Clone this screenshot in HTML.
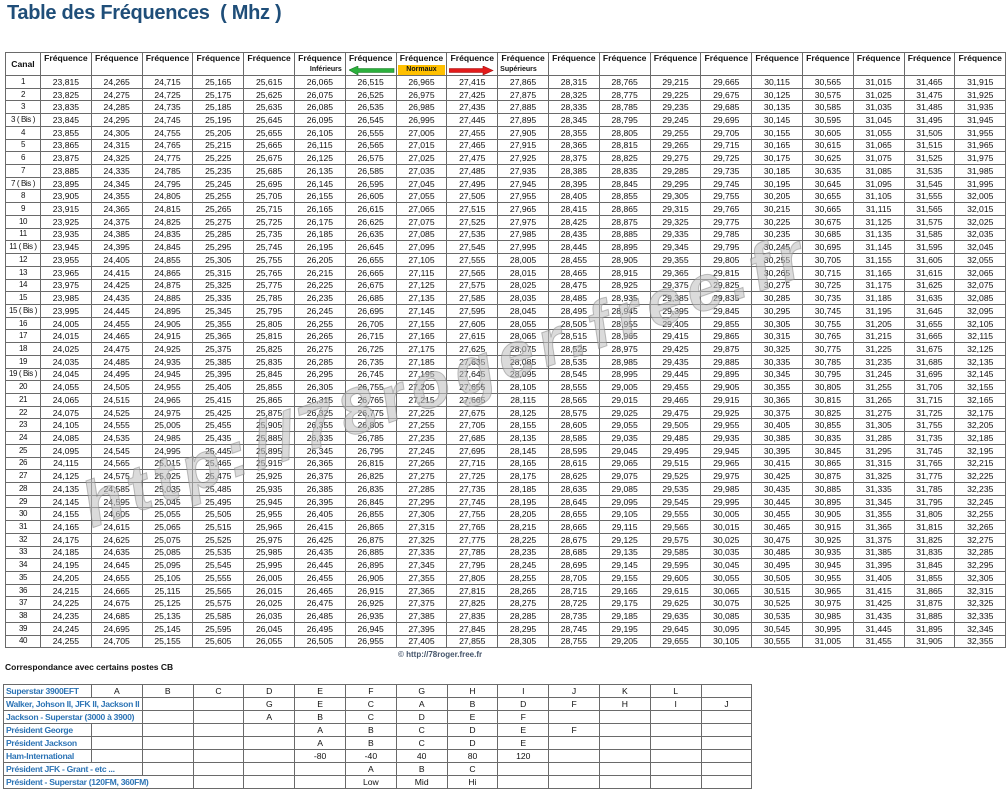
<!DOCTYPE html>
<html><head><meta charset="utf-8"><style>
body{margin:0;width:1006px;height:800px;background:#fff;position:relative;overflow:hidden;font-family:"Liberation Sans",Arial,sans-serif;color:#111}
h1{position:absolute;left:7px;top:2px;margin:0;font-size:20px;font-weight:bold;color:#1f4e79;letter-spacing:-0.3px;white-space:pre}
table{border-collapse:collapse;table-layout:fixed;position:absolute}
#m{left:5px;top:52px;width:1000px}
#m td{border:1px solid #6a6a6a;font-size:8.6px;text-align:center;padding:0;height:11.73px;line-height:10px;overflow:hidden;white-space:nowrap}
#m td:first-child{font-size:8px;letter-spacing:-0.4px}
#m tr.h td{height:22px;vertical-align:top;font-weight:bold;position:relative;line-height:11px;font-size:8.6px;letter-spacing:0}
.sub{position:absolute;left:0;right:0;top:12px;height:10px;font-size:7px;line-height:10px}
.cp{position:absolute;left:398px;top:650px;font-size:8px;font-weight:bold;color:#44546a}
.cb{position:absolute;left:5px;top:662px;font-size:8.5px;font-weight:bold}
#b{left:3px;top:684px;width:749px}
#b td{border:1px solid #6a6a6a;font-size:8.6px;text-align:center;padding:0;height:12px;line-height:10px;white-space:nowrap;overflow:hidden}
#b td.l{text-align:left;color:#2e75b6;font-weight:bold;padding-left:2px;letter-spacing:-0.3px}
svg{position:absolute;left:0;top:0}
</style></head><body>
<h1>Table des Fréquences  ( Mhz )</h1>
<table id="m">
<colgroup><col style="width:35px"><col span="19" style="width:50.8px"></colgroup>
<tr class="h"><td style="vertical-align:middle">Canal</td><td>Fréquence</td><td>Fréquence</td><td>Fréquence</td><td>Fréquence</td><td>Fréquence</td><td>Fréquence<div class="sub" style="text-align:right;padding-right:3px">Inférieurs</div></td><td>Fréquence<div class="sub"><svg width="50" height="10" style="position:absolute;left:3px;top:1px"><polygon points="0,4 9,0 9,2.5 45,2.5 45,6.5 9,6.5 9,9" fill="#2bb03c" stroke="#1d7a28" stroke-width="0.6"/></svg></div></td><td>Fréquence<div class="sub" style="background:#ffc000;left:1px;right:1px">Normaux</div></td><td>Fréquence<div class="sub"><svg width="50" height="10" style="position:absolute;left:2px;top:1px"><polygon points="0,2.5 34,2.5 34,0 44,4.5 34,9 34,6.5 0,6.5" fill="#e31b1b" stroke="#a01010" stroke-width="0.6"/></svg></div></td><td>Fréquence<div class="sub" style="text-align:left;padding-left:2px">Supérieurs</div></td><td>Fréquence</td><td>Fréquence</td><td>Fréquence</td><td>Fréquence</td><td>Fréquence</td><td>Fréquence</td><td>Fréquence</td><td>Fréquence</td><td>Fréquence</td></tr>
<tr><td>1<td>23,815<td>24,265<td>24,715<td>25,165<td>25,615<td>26,065<td>26,515<td>26,965<td>27,415<td>27,865<td>28,315<td>28,765<td>29,215<td>29,665<td>30,115<td>30,565<td>31,015<td>31,465<td>31,915</tr>
<tr><td>2<td>23,825<td>24,275<td>24,725<td>25,175<td>25,625<td>26,075<td>26,525<td>26,975<td>27,425<td>27,875<td>28,325<td>28,775<td>29,225<td>29,675<td>30,125<td>30,575<td>31,025<td>31,475<td>31,925</tr>
<tr><td>3<td>23,835<td>24,285<td>24,735<td>25,185<td>25,635<td>26,085<td>26,535<td>26,985<td>27,435<td>27,885<td>28,335<td>28,785<td>29,235<td>29,685<td>30,135<td>30,585<td>31,035<td>31,485<td>31,935</tr>
<tr><td>3 ( Bis )<td>23,845<td>24,295<td>24,745<td>25,195<td>25,645<td>26,095<td>26,545<td>26,995<td>27,445<td>27,895<td>28,345<td>28,795<td>29,245<td>29,695<td>30,145<td>30,595<td>31,045<td>31,495<td>31,945</tr>
<tr><td>4<td>23,855<td>24,305<td>24,755<td>25,205<td>25,655<td>26,105<td>26,555<td>27,005<td>27,455<td>27,905<td>28,355<td>28,805<td>29,255<td>29,705<td>30,155<td>30,605<td>31,055<td>31,505<td>31,955</tr>
<tr><td>5<td>23,865<td>24,315<td>24,765<td>25,215<td>25,665<td>26,115<td>26,565<td>27,015<td>27,465<td>27,915<td>28,365<td>28,815<td>29,265<td>29,715<td>30,165<td>30,615<td>31,065<td>31,515<td>31,965</tr>
<tr><td>6<td>23,875<td>24,325<td>24,775<td>25,225<td>25,675<td>26,125<td>26,575<td>27,025<td>27,475<td>27,925<td>28,375<td>28,825<td>29,275<td>29,725<td>30,175<td>30,625<td>31,075<td>31,525<td>31,975</tr>
<tr><td>7<td>23,885<td>24,335<td>24,785<td>25,235<td>25,685<td>26,135<td>26,585<td>27,035<td>27,485<td>27,935<td>28,385<td>28,835<td>29,285<td>29,735<td>30,185<td>30,635<td>31,085<td>31,535<td>31,985</tr>
<tr><td>7 ( Bis )<td>23,895<td>24,345<td>24,795<td>25,245<td>25,695<td>26,145<td>26,595<td>27,045<td>27,495<td>27,945<td>28,395<td>28,845<td>29,295<td>29,745<td>30,195<td>30,645<td>31,095<td>31,545<td>31,995</tr>
<tr><td>8<td>23,905<td>24,355<td>24,805<td>25,255<td>25,705<td>26,155<td>26,605<td>27,055<td>27,505<td>27,955<td>28,405<td>28,855<td>29,305<td>29,755<td>30,205<td>30,655<td>31,105<td>31,555<td>32,005</tr>
<tr><td>9<td>23,915<td>24,365<td>24,815<td>25,265<td>25,715<td>26,165<td>26,615<td>27,065<td>27,515<td>27,965<td>28,415<td>28,865<td>29,315<td>29,765<td>30,215<td>30,665<td>31,115<td>31,565<td>32,015</tr>
<tr><td>10<td>23,925<td>24,375<td>24,825<td>25,275<td>25,725<td>26,175<td>26,625<td>27,075<td>27,525<td>27,975<td>28,425<td>28,875<td>29,325<td>29,775<td>30,225<td>30,675<td>31,125<td>31,575<td>32,025</tr>
<tr><td>11<td>23,935<td>24,385<td>24,835<td>25,285<td>25,735<td>26,185<td>26,635<td>27,085<td>27,535<td>27,985<td>28,435<td>28,885<td>29,335<td>29,785<td>30,235<td>30,685<td>31,135<td>31,585<td>32,035</tr>
<tr><td>11 ( Bis )<td>23,945<td>24,395<td>24,845<td>25,295<td>25,745<td>26,195<td>26,645<td>27,095<td>27,545<td>27,995<td>28,445<td>28,895<td>29,345<td>29,795<td>30,245<td>30,695<td>31,145<td>31,595<td>32,045</tr>
<tr><td>12<td>23,955<td>24,405<td>24,855<td>25,305<td>25,755<td>26,205<td>26,655<td>27,105<td>27,555<td>28,005<td>28,455<td>28,905<td>29,355<td>29,805<td>30,255<td>30,705<td>31,155<td>31,605<td>32,055</tr>
<tr><td>13<td>23,965<td>24,415<td>24,865<td>25,315<td>25,765<td>26,215<td>26,665<td>27,115<td>27,565<td>28,015<td>28,465<td>28,915<td>29,365<td>29,815<td>30,265<td>30,715<td>31,165<td>31,615<td>32,065</tr>
<tr><td>14<td>23,975<td>24,425<td>24,875<td>25,325<td>25,775<td>26,225<td>26,675<td>27,125<td>27,575<td>28,025<td>28,475<td>28,925<td>29,375<td>29,825<td>30,275<td>30,725<td>31,175<td>31,625<td>32,075</tr>
<tr><td>15<td>23,985<td>24,435<td>24,885<td>25,335<td>25,785<td>26,235<td>26,685<td>27,135<td>27,585<td>28,035<td>28,485<td>28,935<td>29,385<td>29,835<td>30,285<td>30,735<td>31,185<td>31,635<td>32,085</tr>
<tr><td>15 ( Bis )<td>23,995<td>24,445<td>24,895<td>25,345<td>25,795<td>26,245<td>26,695<td>27,145<td>27,595<td>28,045<td>28,495<td>28,945<td>29,395<td>29,845<td>30,295<td>30,745<td>31,195<td>31,645<td>32,095</tr>
<tr><td>16<td>24,005<td>24,455<td>24,905<td>25,355<td>25,805<td>26,255<td>26,705<td>27,155<td>27,605<td>28,055<td>28,505<td>28,955<td>29,405<td>29,855<td>30,305<td>30,755<td>31,205<td>31,655<td>32,105</tr>
<tr><td>17<td>24,015<td>24,465<td>24,915<td>25,365<td>25,815<td>26,265<td>26,715<td>27,165<td>27,615<td>28,065<td>28,515<td>28,965<td>29,415<td>29,865<td>30,315<td>30,765<td>31,215<td>31,665<td>32,115</tr>
<tr><td>18<td>24,025<td>24,475<td>24,925<td>25,375<td>25,825<td>26,275<td>26,725<td>27,175<td>27,625<td>28,075<td>28,525<td>28,975<td>29,425<td>29,875<td>30,325<td>30,775<td>31,225<td>31,675<td>32,125</tr>
<tr><td>19<td>24,035<td>24,485<td>24,935<td>25,385<td>25,835<td>26,285<td>26,735<td>27,185<td>27,635<td>28,085<td>28,535<td>28,985<td>29,435<td>29,885<td>30,335<td>30,785<td>31,235<td>31,685<td>32,135</tr>
<tr><td>19 ( Bis )<td>24,045<td>24,495<td>24,945<td>25,395<td>25,845<td>26,295<td>26,745<td>27,195<td>27,645<td>28,095<td>28,545<td>28,995<td>29,445<td>29,895<td>30,345<td>30,795<td>31,245<td>31,695<td>32,145</tr>
<tr><td>20<td>24,055<td>24,505<td>24,955<td>25,405<td>25,855<td>26,305<td>26,755<td>27,205<td>27,655<td>28,105<td>28,555<td>29,005<td>29,455<td>29,905<td>30,355<td>30,805<td>31,255<td>31,705<td>32,155</tr>
<tr><td>21<td>24,065<td>24,515<td>24,965<td>25,415<td>25,865<td>26,315<td>26,765<td>27,215<td>27,665<td>28,115<td>28,565<td>29,015<td>29,465<td>29,915<td>30,365<td>30,815<td>31,265<td>31,715<td>32,165</tr>
<tr><td>22<td>24,075<td>24,525<td>24,975<td>25,425<td>25,875<td>26,325<td>26,775<td>27,225<td>27,675<td>28,125<td>28,575<td>29,025<td>29,475<td>29,925<td>30,375<td>30,825<td>31,275<td>31,725<td>32,175</tr>
<tr><td>23<td>24,105<td>24,555<td>25,005<td>25,455<td>25,905<td>26,355<td>26,805<td>27,255<td>27,705<td>28,155<td>28,605<td>29,055<td>29,505<td>29,955<td>30,405<td>30,855<td>31,305<td>31,755<td>32,205</tr>
<tr><td>24<td>24,085<td>24,535<td>24,985<td>25,435<td>25,885<td>26,335<td>26,785<td>27,235<td>27,685<td>28,135<td>28,585<td>29,035<td>29,485<td>29,935<td>30,385<td>30,835<td>31,285<td>31,735<td>32,185</tr>
<tr><td>25<td>24,095<td>24,545<td>24,995<td>25,445<td>25,895<td>26,345<td>26,795<td>27,245<td>27,695<td>28,145<td>28,595<td>29,045<td>29,495<td>29,945<td>30,395<td>30,845<td>31,295<td>31,745<td>32,195</tr>
<tr><td>26<td>24,115<td>24,565<td>25,015<td>25,465<td>25,915<td>26,365<td>26,815<td>27,265<td>27,715<td>28,165<td>28,615<td>29,065<td>29,515<td>29,965<td>30,415<td>30,865<td>31,315<td>31,765<td>32,215</tr>
<tr><td>27<td>24,125<td>24,575<td>25,025<td>25,475<td>25,925<td>26,375<td>26,825<td>27,275<td>27,725<td>28,175<td>28,625<td>29,075<td>29,525<td>29,975<td>30,425<td>30,875<td>31,325<td>31,775<td>32,225</tr>
<tr><td>28<td>24,135<td>24,585<td>25,035<td>25,485<td>25,935<td>26,385<td>26,835<td>27,285<td>27,735<td>28,185<td>28,635<td>29,085<td>29,535<td>29,985<td>30,435<td>30,885<td>31,335<td>31,785<td>32,235</tr>
<tr><td>29<td>24,145<td>24,595<td>25,045<td>25,495<td>25,945<td>26,395<td>26,845<td>27,295<td>27,745<td>28,195<td>28,645<td>29,095<td>29,545<td>29,995<td>30,445<td>30,895<td>31,345<td>31,795<td>32,245</tr>
<tr><td>30<td>24,155<td>24,605<td>25,055<td>25,505<td>25,955<td>26,405<td>26,855<td>27,305<td>27,755<td>28,205<td>28,655<td>29,105<td>29,555<td>30,005<td>30,455<td>30,905<td>31,355<td>31,805<td>32,255</tr>
<tr><td>31<td>24,165<td>24,615<td>25,065<td>25,515<td>25,965<td>26,415<td>26,865<td>27,315<td>27,765<td>28,215<td>28,665<td>29,115<td>29,565<td>30,015<td>30,465<td>30,915<td>31,365<td>31,815<td>32,265</tr>
<tr><td>32<td>24,175<td>24,625<td>25,075<td>25,525<td>25,975<td>26,425<td>26,875<td>27,325<td>27,775<td>28,225<td>28,675<td>29,125<td>29,575<td>30,025<td>30,475<td>30,925<td>31,375<td>31,825<td>32,275</tr>
<tr><td>33<td>24,185<td>24,635<td>25,085<td>25,535<td>25,985<td>26,435<td>26,885<td>27,335<td>27,785<td>28,235<td>28,685<td>29,135<td>29,585<td>30,035<td>30,485<td>30,935<td>31,385<td>31,835<td>32,285</tr>
<tr><td>34<td>24,195<td>24,645<td>25,095<td>25,545<td>25,995<td>26,445<td>26,895<td>27,345<td>27,795<td>28,245<td>28,695<td>29,145<td>29,595<td>30,045<td>30,495<td>30,945<td>31,395<td>31,845<td>32,295</tr>
<tr><td>35<td>24,205<td>24,655<td>25,105<td>25,555<td>26,005<td>26,455<td>26,905<td>27,355<td>27,805<td>28,255<td>28,705<td>29,155<td>29,605<td>30,055<td>30,505<td>30,955<td>31,405<td>31,855<td>32,305</tr>
<tr><td>36<td>24,215<td>24,665<td>25,115<td>25,565<td>26,015<td>26,465<td>26,915<td>27,365<td>27,815<td>28,265<td>28,715<td>29,165<td>29,615<td>30,065<td>30,515<td>30,965<td>31,415<td>31,865<td>32,315</tr>
<tr><td>37<td>24,225<td>24,675<td>25,125<td>25,575<td>26,025<td>26,475<td>26,925<td>27,375<td>27,825<td>28,275<td>28,725<td>29,175<td>29,625<td>30,075<td>30,525<td>30,975<td>31,425<td>31,875<td>32,325</tr>
<tr><td>38<td>24,235<td>24,685<td>25,135<td>25,585<td>26,035<td>26,485<td>26,935<td>27,385<td>27,835<td>28,285<td>28,735<td>29,185<td>29,635<td>30,085<td>30,535<td>30,985<td>31,435<td>31,885<td>32,335</tr>
<tr><td>39<td>24,245<td>24,695<td>25,145<td>25,595<td>26,045<td>26,495<td>26,945<td>27,395<td>27,845<td>28,295<td>28,745<td>29,195<td>29,645<td>30,095<td>30,545<td>30,995<td>31,445<td>31,895<td>32,345</tr>
<tr><td>40<td>24,255<td>24,705<td>25,155<td>25,605<td>26,055<td>26,505<td>26,955<td>27,405<td>27,855<td>28,305<td>28,755<td>29,205<td>29,655<td>30,105<td>30,555<td>31,005<td>31,455<td>31,905<td>32,355</tr>
</table>
<svg width="1006" height="800"><text x="0" y="0" transform="translate(92,528) rotate(-19.5)" font-family="Liberation Sans, sans-serif" font-size="64" font-weight="bold" font-style="italic" fill="rgba(190,190,190,0.55)" stroke="rgba(130,130,130,0.5)" stroke-width="1" textLength="760">http://78roger.free.fr</text></svg>
<div class="cp">© http://78roger.free.fr</div>
<div class="cb">Correspondance avec certains postes CB</div>
<table id="b">
<colgroup><col style="width:88px"><col span="13" style="width:50.8px"></colgroup>
<tr><td class="l">Superstar 3900EFT<td>A<td>B<td>C<td>D<td>E<td>F<td>G<td>H<td>I<td>J<td>K<td>L<td></tr>
<tr><td class="l" colspan="2">Walker, Johson II, JFK II, Jackson II<td><td><td>G<td>E<td>C<td>A<td>B<td>D<td>F<td>H<td>I<td>J</tr>
<tr><td class="l" colspan="2">Jackson - Superstar (3000 à 3900)<td><td><td>A<td>B<td>C<td>D<td>E<td>F<td><td><td><td></tr>
<tr><td class="l">Président George<td><td><td><td><td>A<td>B<td>C<td>D<td>E<td>F<td><td><td></tr>
<tr><td class="l">Président Jackson<td><td><td><td><td>A<td>B<td>C<td>D<td>E<td><td><td><td></tr>
<tr><td class="l">Ham-International<td><td><td><td><td>-80<td>-40<td>40<td>80<td>120<td><td><td><td></tr>
<tr><td class="l" colspan="2">Président JFK - Grant - etc ...<td><td><td><td><td>A<td>B<td>C<td><td><td><td><td></tr>
<tr><td class="l" colspan="3">Président - Superstar (120FM, 360FM)<td><td><td><td>Low<td>Mid<td>Hi<td><td><td><td><td></tr>
</table>
</body></html>
